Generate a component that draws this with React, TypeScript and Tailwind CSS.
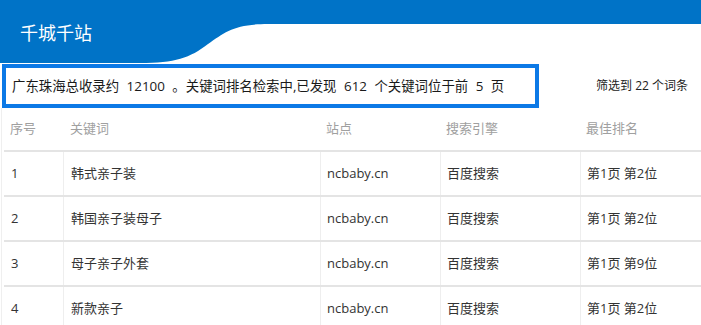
import React from "react";

type Row = { no: number; keyword: string; site: string; engine: string; rank: string };

const rows: Row[] = [
  { no: 1, keyword: "韩式亲子装", site: "ncbaby.cn", engine: "百度搜索", rank: "第1页 第2位" },
  { no: 2, keyword: "韩国亲子装母子", site: "ncbaby.cn", engine: "百度搜索", rank: "第1页 第2位" },
  { no: 3, keyword: "母子亲子外套", site: "ncbaby.cn", engine: "百度搜索", rank: "第1页 第9位" },
  { no: 4, keyword: "新款亲子", site: "ncbaby.cn", engine: "百度搜索", rank: "第1页 第2位" },
];

const font = { fontFamily: '"Open Sans", "Noto Sans CJK SC", sans-serif' };

const cols = "grid grid-cols-[59px_257px_120px_140px_1fr]";

export default function App() {
  return (
    <div className="w-[701px] h-[325px] overflow-hidden bg-white" style={font}>
      {/* title bar with wave-shaped tab */}
      <div className="relative h-[64px]">
        <svg className="absolute inset-0" width="701" height="64" viewBox="0 0 701 64">
          <path
            d="M0 0 H701 V24 H268 C235 24 225 32 208 44 C190 58 175 63 140 63 H0 Z"
            fill="#0073c7"
          />
        </svg>
        <div className="relative pl-[20px] pt-[19px] text-[18px] leading-[28px] text-white">千城千站</div>
      </div>

      {/* summary line */}
      <div className="flex items-center justify-between h-[44px] pr-[13px]">
        <div className="ml-[2px] w-[537px] h-[44px] border-4 border-[#0c79e6] flex items-center pl-[6px] text-[13.4px] [word-spacing:4px] text-[#1a1a1a] whitespace-nowrap">
          广东珠海总收录约 12100 。关键词排名检索中,已发现 612 个关键词位于前 5 页
        </div>
        <div className="text-[12px] text-[#222]">筛选到 22 个词条</div>
      </div>

      {/* ranking table */}
      <div className="ml-[1px] border-l border-[#efefef] pl-[2px]">
        <div className={`${cols} h-[44px] items-center border-b-2 border-[#e4e4e4] text-[13px] text-[#a0a0a0]`}>
          <div className="pl-[6px]">序号</div>
          <div className="pl-[7px]">关键词</div>
          <div className="pl-[6px]">站点</div>
          <div className="pl-[6px]">搜索引擎</div>
          <div className="pl-[6px]">最佳排名</div>
        </div>
        {rows.map((r) => (
          <div key={r.no} className={`${cols} h-[45px] border-b-2 border-[#e4e4e4] text-[13px] text-[#333]`}>
            <div className="flex items-center pl-[7px]">{r.no}</div>
            <div className="flex items-center pl-[7px] border-l border-[#eeeeee]">{r.keyword}</div>
            <div className="flex items-center pl-[6px] border-l border-[#eeeeee]">{r.site}</div>
            <div className="flex items-center pl-[6px] border-l border-[#eeeeee]">{r.engine}</div>
            <div className="flex items-center pl-[6px] border-l border-[#eeeeee]">{r.rank}</div>
          </div>
        ))}
      </div>
    </div>
  );
}
